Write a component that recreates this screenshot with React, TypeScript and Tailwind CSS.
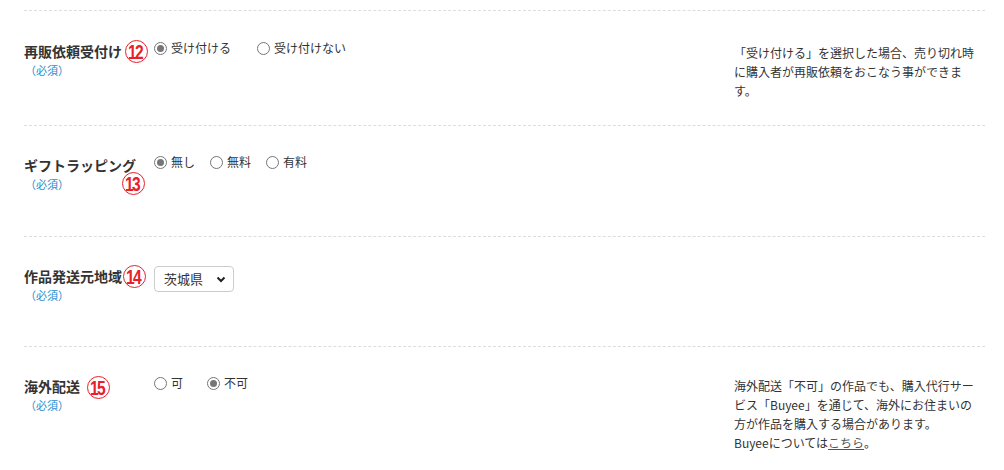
const jp = "font-['Noto_Sans_CJK_JP','Noto_Sans',sans-serif]";

function Radio({ label, checked }: { label: string; checked?: boolean }) {
  return (
    <label className="flex items-center gap-[4px] text-[12px] text-[#333] leading-[20px]">
      <span className="w-[13px] h-[13px] rounded-full border border-[#767676] bg-white flex items-center justify-center">
        {checked && <span className="w-[7px] h-[7px] rounded-full bg-[#767676]" />}
      </span>
      <span>{label}</span>
    </label>
  );
}

function Num({ n, className }: { n: string; className: string }) {
  return (
    <div
      className={`absolute w-[23px] h-[23px] rounded-full border-[1.5px] border-[#e8202a] bg-white flex items-center justify-center ${className}`}
    >
      <span className="text-[#e8202a] font-bold text-[20px] leading-none tracking-[-2px] -ml-[2px] scale-x-[0.78] font-['Liberation_Sans',sans-serif]">
        {n}
      </span>
    </div>
  );
}

function Label({ title }: { title: string }) {
  return (
    <div className="w-[130px] shrink-0">
      <div className="text-[14px] font-bold text-[#333] leading-[20px]">{title}</div>
      <div className="text-[11px] text-[#2b8ccc] leading-[18px] ml-[1px]">（必須）</div>
    </div>
  );
}

export default function App() {
  return (
    <div className={`bg-white w-[1004px] h-[470px] overflow-hidden pt-[10px] ${jp}`}>
      <div className="ml-[24px] w-[961px]">
        <div className="relative h-[115px] border-t border-dashed border-[#ddd] flex pt-[30px]">
          <Label title="再販依頼受付け" />
          <div className="flex gap-[26px] -mt-[3px] h-fit">
            <Radio label="受け付ける" checked />
            <Radio label="受け付けない" />
          </div>
          <p className="ml-auto w-[251px] pt-[2px] text-[12px] leading-[19px] text-[#333]">
            「受け付ける」を選択した場合、売り切れ時
            <br />
            に購入者が再販依頼をおこなう事ができま
            <br />
            す。
          </p>
          <Num n="12" className="left-[101px] top-[29px]" />
        </div>

        <div className="relative h-[111px] border-t border-dashed border-[#ddd] flex pt-[29px]">
          <Label title="ギフトラッピング" />
          <div className="flex gap-[15px] -mt-[3px] h-fit">
            <Radio label="無し" checked />
            <Radio label="無料" />
            <Radio label="有料" />
          </div>
          <Num n="13" className="left-[98px] top-[46px]" />
        </div>

        <div className="relative h-[110px] border-t border-dashed border-[#ddd] flex pt-[29px]">
          <Label title="作品発送元地域" />
          <div className="h-fit">
            <div className="w-[80px] h-[26px] border border-[#ccc] rounded-[4px] bg-white flex items-center justify-between pl-[9px] pr-[7px]">
              <span className="text-[13px] text-[#333]">茨城県</span>
              <svg width="10" height="10" viewBox="0 0 10 10">
                <path d="M1.5 3.5 L5 7 L8.5 3.5" fill="none" stroke="#222" strokeWidth="2" />
              </svg>
            </div>
          </div>
          <Num n="14" className="left-[99px] top-[28px]" />
        </div>

        <div className="relative h-[124px] border-t border-dashed border-[#ddd] flex pt-[29px]">
          <Label title="海外配送" />
          <div className="flex gap-[24px] -mt-[3px] h-fit">
            <Radio label="可" />
            <Radio label="不可" checked />
          </div>
          <p className="ml-auto w-[251px] text-[12px] leading-[19px] text-[#333]">
            海外配送「不可」の作品でも、購入代行サー
            <br />
            ビス「Buyee」を通じて、海外にお住まいの
            <br />
            方が作品を購入する場合があります。
            <br />
            Buyeeについては<a className="underline text-[#555]">こちら</a>。
          </p>
          <Num n="15" className="left-[63px] top-[29px]" />
        </div>
      </div>
    </div>
  );
}
